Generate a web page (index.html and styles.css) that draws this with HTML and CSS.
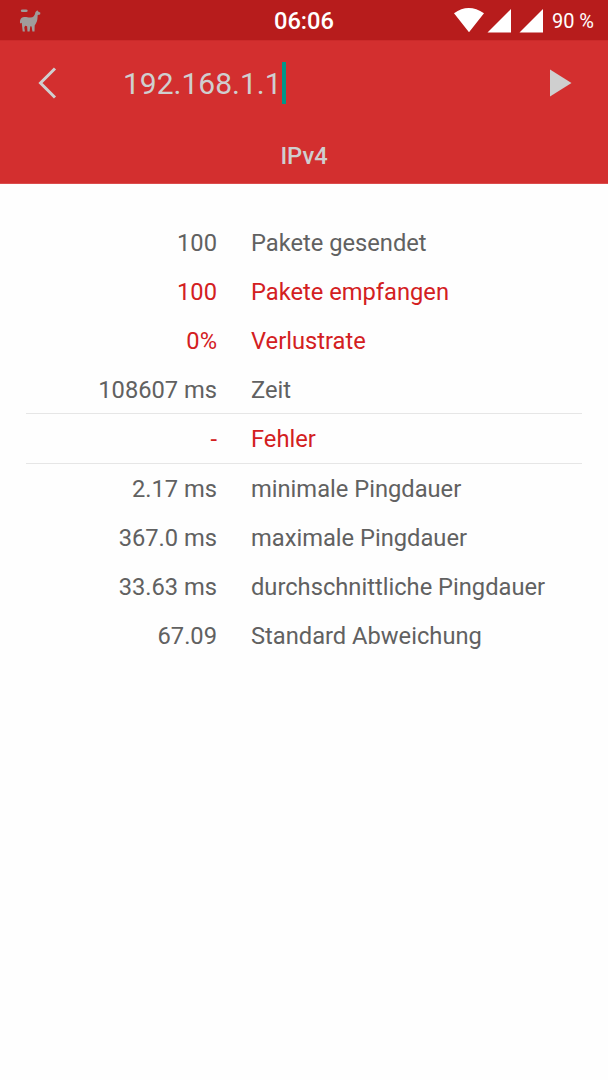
FILE: index.html
```html
<!DOCTYPE html>
<html lang="de">
<head>
<meta charset="utf-8">
<title>Ping</title>
<link rel="stylesheet" href="styles.css">
</head>
<body>
<header class="status">
  <div class="status-left">
    <svg class="llama" width="24" height="26" viewBox="0 0 24 26"><path d="M4.500 2.500h3.500q1.700 0 1.700 1.300T8 5.100H4.500Q2.800 5.100 2.800 3.800t1.700-1.300zM17.500 5l1.800-1.800.9 1.300 2.200 1.200-.3 1.700-2.400.5c-.2 3.200-.1 5.800-1.800 8.600l-1.200 2-.2 6h-2.100l-.8-5-1.300-.2-.7 5.200H9.500l-.4-5.300-2-.4-.8 1.800.6 3.900H4.700L4 18.500l-.3-2.800-1.600.7C1.500 12.500 3.300 10.200 6 10c2.400-.2 3.800.6 6.300.6 3 0 4.500-2 5.200-5.600z"/></svg>
  </div>
  <time class="clock">06:06</time>
  <div class="status-right">
    <svg class="signals" width="92" height="26" viewBox="0 0 92 26"><path d="M1 5.300Q15.500-5.300 31 5.300L16 24.300zM34.500 24.500 58 1v23.500zM66.500 24.500 90 1v23.500z"/></svg>
    <span class="battery">90 %</span>
  </div>
</header>
<section class="toolbar">
  <div class="address-row">
    <svg class="back" width="20" height="32" viewBox="0 0 20 32"><path d="M18 1.500 3.500 16 18 30.500"/></svg>
    <div class="address"><span>192.168.1.1</span><i class="caret"></i></div>
    <svg class="play" width="22" height="28" viewBox="0 0 22 28"><path d="M0 0.500 21.500 14 0 27.500z"/></svg>
  </div>
  <div class="protocol">IPv4</div>
</section>
<main class="results">
  <div class="row"><span class="value">100</span><span class="label">Pakete gesendet</span></div>
  <div class="row alert"><span class="value">100</span><span class="label">Pakete empfangen</span></div>
  <div class="row alert"><span class="value">0%</span><span class="label">Verlustrate</span></div>
  <div class="row"><span class="value">108607 ms</span><span class="label">Zeit</span></div>
  <div class="row alert errors"><span class="value">-</span><span class="label">Fehler</span></div>
  <div class="row"><span class="value">2.17 ms</span><span class="label">minimale Pingdauer</span></div>
  <div class="row"><span class="value">367.0 ms</span><span class="label">maximale Pingdauer</span></div>
  <div class="row"><span class="value">33.63 ms</span><span class="label">durchschnittliche Pingdauer</span></div>
  <div class="row"><span class="value">67.09</span><span class="label">Standard Abweichung</span></div>
</main>
</body>
</html>
```
FILE: styles.css
```css
* { box-sizing: border-box; }
body {
  margin: 0;
  min-height: 1080px;
  background: #fefefe;
  color: #616161;
  font-family: Roboto, sans-serif;
  font-size: 23.7px;
}
svg { display: block; }
.status {
  display: grid;
  grid-template-columns: 1fr auto 1fr;
  align-items: center;
  height: 41px;
  padding: 0 14px 0 18px;
  background: #b71c1c;
  border-bottom: 1px solid #cb2a2a;
  color: #fff;
}
.llama { fill: #a09c9b; margin-bottom: 1px; }
.clock { font-weight: 500; font-size: 23.7px; margin-left: -4px; line-height: 40px; }
.status-right { display: flex; justify-content: flex-end; align-items: center; gap: 7px; }
.signals { fill: #fff; }
.battery { font-size: 20px; line-height: 40px; padding-top: 1px; }
.toolbar {
  height: 143px;
  background: #d32f2f;
  border-bottom: 1px solid #db4c4c;
  color: #cfcfcf;
}
.address-row { display: flex; align-items: center; height: 84px; padding: 0 36px 0 37px; }
.back { fill: none; stroke: #cfcfcf; stroke-width: 3; }
.address { flex: 1; display: flex; align-items: center; margin-left: 66px; font-size: 30px; line-height: 42px; }
.address span { padding-top: 2px; }
.caret { width: 4px; height: 42px; background: #009688; }
.play { fill: #cfcfcf; }
.protocol { text-align: center; font-weight: 500; font-size: 23.7px; line-height: 62px; }
.results { padding: 33px 26px 0; }
.row { display: grid; grid-template-columns: 191px 1fr; column-gap: 34px; height: 49px; line-height: 53px; white-space: nowrap; }
.value { text-align: right; }
.alert { color: #d3201f; }
.errors { height: 51px; line-height: 51px; border: solid #e6e6e6; border-width: 1px 0; }
.errors ~ .row { line-height: 51px; }
```
